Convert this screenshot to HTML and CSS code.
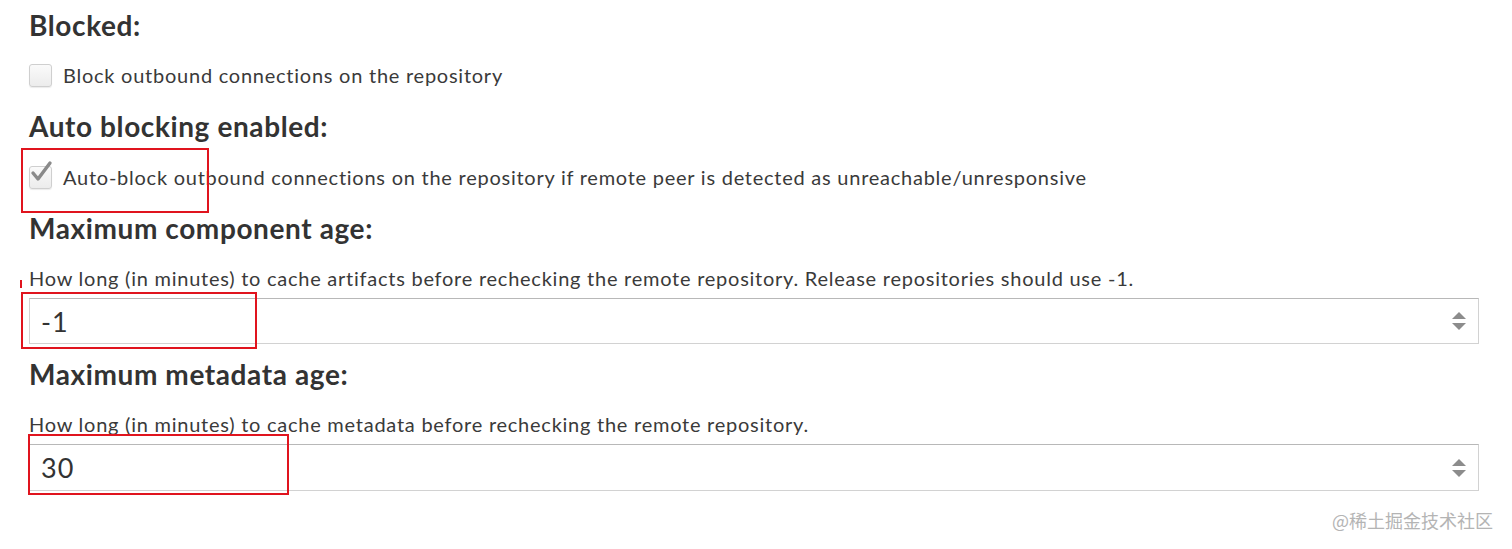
FILE: index.html
```html
<!DOCTYPE html>
<html>
<head>
<meta charset="utf-8">
<link rel="stylesheet" href="styles.css">
</head>
<body>
<div class="page">
  <h2 class="heading h-first">Blocked:</h2>
  <div class="check-row">
    <span class="box"></span>
    <span class="label">Block outbound connections on the repository</span>
  </div>
  <h2 class="heading h-second">Auto blocking enabled:</h2>
  <div class="check-row check-row-2">
    <span class="box checked">
      <svg class="tick" width="26" height="26" viewBox="0 0 26 26"><path d="M5 13 L10 19 L22 3" fill="none" stroke="#8a8a8a" stroke-width="3.4" stroke-linecap="round" stroke-linejoin="round"/></svg>
    </span>
    <span class="label">Auto-block outbound connections on the repository if remote peer is detected as unreachable/unresponsive</span>
  </div>
  <h2 class="heading h-third">Maximum component age:</h2>
  <p class="help">How long (in minutes) to cache artifacts before rechecking the remote repository. Release repositories should use -1.</p>
  <div class="input input-1">
    <span class="value">-1</span>
    <svg class="spin" width="16" height="22" viewBox="0 0 16 22"><path d="M8 2 L15 9 L1 9 Z" fill="#8c8c8c"/><path d="M1 13 L15 13 L8 20 Z" fill="#8c8c8c"/></svg>
  </div>
  <h2 class="heading h-fourth">Maximum metadata age:</h2>
  <p class="help help-2">How long (in minutes) to cache metadata before rechecking the remote repository.</p>
  <div class="input input-2">
    <span class="value">30</span>
    <svg class="spin" width="16" height="22" viewBox="0 0 16 22"><path d="M8 2 L15 9 L1 9 Z" fill="#8c8c8c"/><path d="M1 13 L15 13 L8 20 Z" fill="#8c8c8c"/></svg>
  </div>
  <div class="watermark">@稀土掘金技术社区</div>

  <div class="mark mark-1"></div>
  <div class="mark mark-2"></div>
  <div class="mark mark-3"></div>
  <div class="mark-tick"></div>
</div>
</body>
</html>
```
FILE: styles.css
```css
html, body {
  margin: 0;
  padding: 0;
  background: #fff;
}
.page {
  position: relative;
  width: 1512px;
  height: 549px;
  padding: 9px 33px 0 29px;
  box-sizing: border-box;
  display: flex;
  flex-direction: column;
  font-family: Lato, "Open Sans", sans-serif;
  color: #333;
  overflow: hidden;
}
.heading {
  margin: 0;
  font-size: 28px;
  line-height: 32px;
  font-weight: 700;
  color: #333;
  letter-spacing: 0.6px;
}
.h-second { margin-top: 20px; }
.h-third { margin-top: 20px; }
.h-fourth { margin-top: 14px; }
.check-row {
  display: flex;
  align-items: center;
  height: 30px;
  margin-top: 19px;
}
.check-row-2 { margin-top: 20px; }
.box {
  position: relative;
  width: 21px;
  height: 21px;
  border: 1px solid #cfcfcf;
  border-radius: 3px;
  background: linear-gradient(#fafafa, #ececec);
  box-shadow: 0 1px 1px rgba(0,0,0,0.08);
  flex: none;
}
.tick {
  position: absolute;
  left: -2px;
  top: -7px;
}
.label {
  margin-left: 11px;
  font-size: 20px;
  letter-spacing: 0.75px;
  color: #3a3a3a;
}
.help {
  margin: 22px 0 0;
  font-size: 20px;
  line-height: 24px;
  letter-spacing: 0.75px;
  color: #3a3a3a;
}
.help-2 { margin-top: 22px; }
.input {
  margin-top: 8px;
  height: 46px;
  border: 1px solid #d2d2d2;
  border-top-color: #b8b8b8;
  box-sizing: border-box;
  display: flex;
  align-items: center;
  justify-content: space-between;
  padding: 0 11px 0 11px;
}
.input-2 { margin-top: 8px; height: 47px; }
.value {
  font-size: 27px;
  letter-spacing: 1px;
  color: #333;
}
.spin { flex: none; }
.watermark {
  margin-top: 16px;
  align-self: flex-end;
  margin-right: -14px;
  font-family: "Noto Sans CJK SC", sans-serif;
  font-size: 18px;
  color: #b4b4b4;
}
.mark {
  position: absolute;
  border: 2px solid #e0141e;
  box-sizing: border-box;
}
.mark-1 { left: 21px; top: 148px; width: 188px; height: 65px; }
.mark-2 { left: 21px; top: 292px; width: 236px; height: 57px; }
.mark-3 { left: 28px; top: 434px; width: 261px; height: 61px; }
.mark-tick {
  position: absolute;
  left: 20px;
  top: 280px;
  width: 2px;
  height: 8px;
  background: #e0141e;
}
```
